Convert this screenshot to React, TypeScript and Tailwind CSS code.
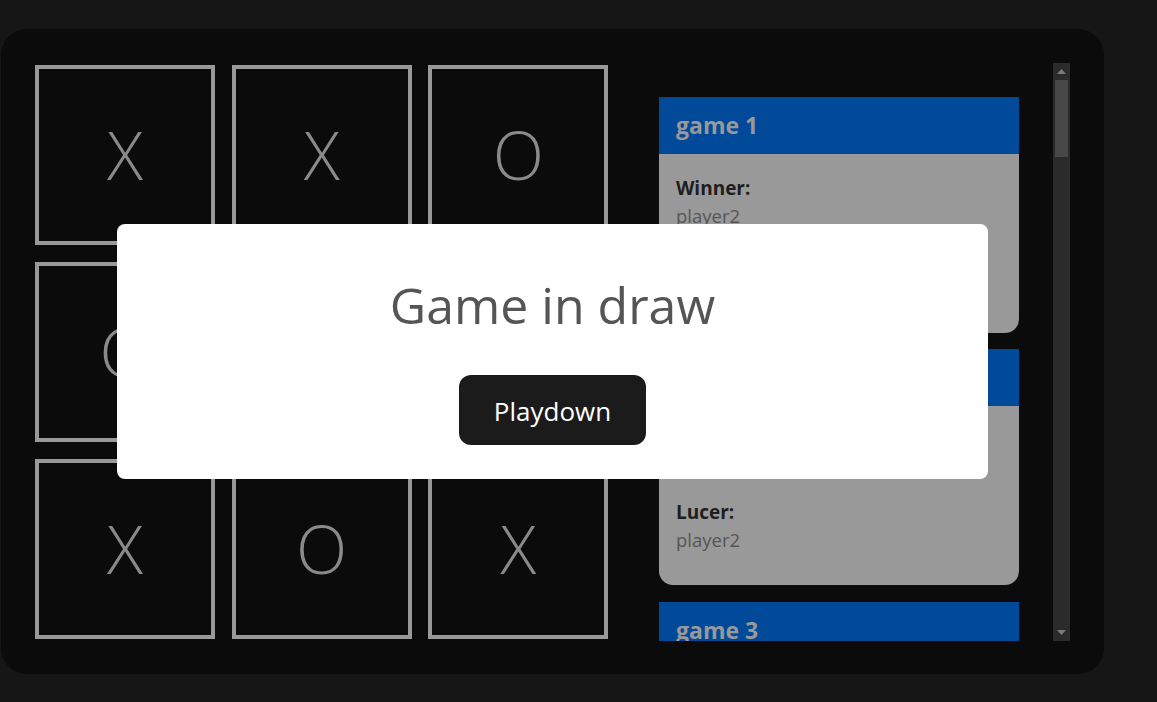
import React from 'react';

const board = ['X', 'X', 'O', 'O', 'X', 'X', 'X', 'O', 'X'];

const games = [
  { id: 1, winner: 'player2', loser: 'player1' },
  { id: 2, winner: 'player1', loser: 'player2' },
  { id: 3, winner: 'player2', loser: 'player1' },
];

const font = { fontFamily: '"Segoe UI", "Open Sans", "Noto Sans", sans-serif' };

const Cell: React.FC<{ value: string }> = ({ value }) => (
  <div className="w-[180px] h-[180px] border-4 border-[#999999] flex items-center justify-center text-[#8a8a8a] text-[67px] font-light leading-none">
    {value}
  </div>
);

const GameCard: React.FC<{ id: number; winner: string; loser: string }> = ({ id, winner, loser }) => (
  <div className="w-[360px] h-[236px] shrink-0 rounded-b-[14px] bg-[#999999] overflow-hidden">
    <div className="h-[57px] bg-[#004a99] flex items-center px-[17px] text-[23px] font-bold text-[#999999]">
      game {id}
    </div>
    <div className="px-[17px] pt-[20px] leading-[28px]">
      <div className="text-[19px] font-bold text-[#1e1e1e]">Winner:</div>
      <div className="text-[18.5px] text-[#555555]">{winner}</div>
      <div className="mt-[16px] text-[19px] font-bold text-[#1e1e1e]">Lucer:</div>
      <div className="text-[18.5px] text-[#555555]">{loser}</div>
    </div>
  </div>
);

const ScrollBar: React.FC = () => (
  <div className="w-[17px] h-[578px] bg-[#2b2b2b] flex flex-col">
    <div className="h-[17px] flex items-center justify-center">
      <svg width="9" height="5" viewBox="0 0 9 5">
        <path d="M0 5 L4.5 0 L9 5 Z" fill="#7a7a7a" />
      </svg>
    </div>
    <div className="mx-[2px] h-[77px] bg-[#474747]" />
    <div className="flex-1" />
    <div className="h-[17px] flex items-center justify-center">
      <svg width="9" height="5" viewBox="0 0 9 5">
        <path d="M0 0 L9 0 L4.5 5 Z" fill="#7a7a7a" />
      </svg>
    </div>
  </div>
);

export default function App() {
  return (
    <div className="min-h-[702px] bg-[#161616] pt-[29px] pl-px" style={font}>
      <div className="relative w-[1103px] h-[645px] rounded-[26px] bg-[#0b0b0b] flex items-center px-[34px]">
        <div className="grid grid-cols-3 gap-[17px]">
          {board.map((v, i) => (
            <Cell key={i} value={v} />
          ))}
        </div>
        <div className="ml-[17px] flex">
          <div className="h-[578px] w-[428px] overflow-hidden p-[34px] flex flex-col gap-[16.5px]">
            {games.map((g) => (
              <GameCard key={g.id} {...g} />
            ))}
          </div>
          <ScrollBar />
        </div>

        <div className="absolute left-[116px] top-[195px] w-[871px] h-[255px] rounded-[8px] bg-white flex flex-col items-center pt-[51px]">
          <h1 className="text-[50px] leading-[60px] text-[#555555]">Game in draw</h1>
          <button className="mt-[40px] w-[187px] h-[70px] rounded-[12px] bg-[#1b1b1b] text-white text-[26px] leading-none pt-[2px]">
            Playdown
          </button>
        </div>
      </div>
    </div>
  );
}
